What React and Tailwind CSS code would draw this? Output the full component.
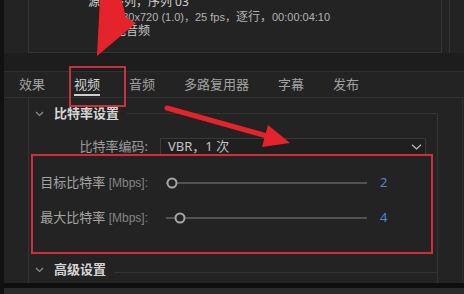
export default function App() {
  const Chevron = () => (
    <svg width="9" height="6" viewBox="0 0 9 6" className="shrink-0">
      <polyline points="1,1 4.5,4.5 8,1" fill="none" stroke="#8e8e8e" strokeWidth="1.2" />
    </svg>
  );
  return (
    <div className="relative w-[464px] h-[294px] overflow-hidden bg-[#232323] flex font-['Noto_Sans','Noto_Sans_CJK_SC',sans-serif]">
      <div className="w-[4px] h-full bg-[#111111] shrink-0" />
      <div className="flex-1 flex flex-col">
        {/* top summary panel */}
        <div className="h-[53px] flex shrink-0">
          <div className="ml-[24px] w-[414px] h-full border-l border-r border-b border-[#353535] pl-[59px] overflow-hidden">
            <div className="-mt-[5px] flex flex-col leading-[14px]">
              <div className="text-[12px] text-[#cfcfcf]">源：序列，序列 03</div>
              <div className="pl-[22px] text-[11px] text-[#b2b2b2] font-['Liberation_Sans','Noto_Sans_CJK_SC',sans-serif]">
                1280x720 (1.0)，25 fps，<span className="text-[12px] font-['Noto_Sans_CJK_SC',sans-serif]">逐行，</span>00:00:04:10
              </div>
              <div className="pl-[26px] text-[12px] text-[#c8c8c8]">无音频</div>
            </div>
          </div>
          <div className="ml-[7px] w-px h-full bg-[#353535]" />
        </div>
        <div className="h-[18px] bg-[#1d1d1d] shrink-0" />
        {/* tabs */}
        <div className="h-[27px] shrink-0 border-t border-b border-[#303030] flex items-center pl-[15px] gap-[29px] text-[13px] text-[#a2a2a2]">
          <div>效果</div>
          <div className="relative h-full flex items-center text-[#d2d2d2]">
            视频
            <div className="absolute left-0 right-0 bottom-[1px] h-[2px] bg-[#cfcfcf]" />
          </div>
          <div>音频</div>
          <div>多路复用器</div>
          <div>字幕</div>
          <div>发布</div>
        </div>
        {/* content */}
        <div className="h-[185px] shrink-0 flex">
          <div className="ml-[24px] w-[410px] h-full border-l border-[#333333] flex flex-col">
            <div className="h-[32px] flex items-center pl-[6px] shrink-0">
              <Chevron />
              <div className="ml-[10px] text-[13px] font-bold text-[#d6d6d6]">比特率设置</div>
              <div className="flex-1 ml-[8px] self-end h-[17px] border-t border-r border-[#333333]" />
            </div>
            <div className="flex-1 border-r border-[#333333] flex flex-col">
              <div className="mt-[8px] h-[18px] flex items-center">
                <div className="w-[119px] text-right text-[13px] text-[#9c9c9c]">比特率编码:</div>
                <div className="ml-[12px] w-[266px] h-full border border-[#3a3a3a] bg-[#1f1f1f] flex items-center pl-[7px] pr-[3px]">
                  <span className="text-[13px] text-[#c4c4c4] flex-1">VBR，1 次</span>
                  <svg width="11" height="6" viewBox="0 0 11 6">
                    <polyline points="1,0.8 5.5,5 10,0.8" fill="none" stroke="#bdbdbd" strokeWidth="1.2" />
                  </svg>
                </div>
              </div>
              {[
                { label: "目标比特率", val: "2", pos: 6 },
                { label: "最大比特率", val: "4", pos: 14 },
              ].map((r, i) => (
                <div key={i} className={`${i === 0 ? "mt-[17px]" : "mt-[15px]"} h-[20px] flex items-center`}>
                  <div className="w-[119px] text-right text-[13px] text-[#a4a4a4] whitespace-nowrap">
                    {r.label}{" "}
                    <span className="text-[12px] text-[#858585] font-['Liberation_Sans',sans-serif]">[Mbps]:</span>
                  </div>
                  <div className="ml-[18px] w-[201px] h-full relative flex items-center">
                    <div className="w-full h-[2px] bg-[#525252]" />
                    <div
                      className="absolute top-1/2 -translate-y-1/2 -translate-x-1/2 w-[11px] h-[11px] rounded-full border-2 border-[#a6a6a6] bg-[#232323]"
                      style={{ left: r.pos }}
                    />
                  </div>
                  <div className="ml-[13px] text-[13px] text-[#4f86d4]">{r.val}</div>
                </div>
              ))}
              <div className="mt-[28px] flex-1 flex items-center pl-[6px]">
                <Chevron />
                <div className="ml-[10px] text-[13px] font-bold text-[#d6d6d6]">高级设置</div>
                <div className="flex-1 ml-[8px] self-end h-[11px] border-t border-[#333333]" />
              </div>
            </div>
          </div>
          <div className="ml-[24px] w-px h-full bg-[#2e2e2e]" />
        </div>
        <div className="h-[5px] bg-[#0e0e0e] shrink-0" />
        <div className="flex-1 bg-[#2a2a2a]" />
      </div>

      {/* annotations */}
      <div className="absolute left-[69px] top-[66px] w-[57px] h-[41px] border-2 border-[#c4323e]" />
      <div className="absolute left-[31px] top-[154px] w-[402px] h-[100px] border-2 border-[#cf2f3a]" />
      <svg className="absolute left-0 top-0 pointer-events-none" width="464" height="294" viewBox="0 0 464 294">
        <polygon points="97,56 100,-2 121,-2 126,17 136,23" fill="#e5232b" />
        <line x1="167" y1="108" x2="267" y2="136" stroke="#e5232b" strokeWidth="5" strokeLinecap="round" />
        <polygon points="290,143 268,125 262,147" fill="#e5232b" />
      </svg>
    </div>
  );
}
